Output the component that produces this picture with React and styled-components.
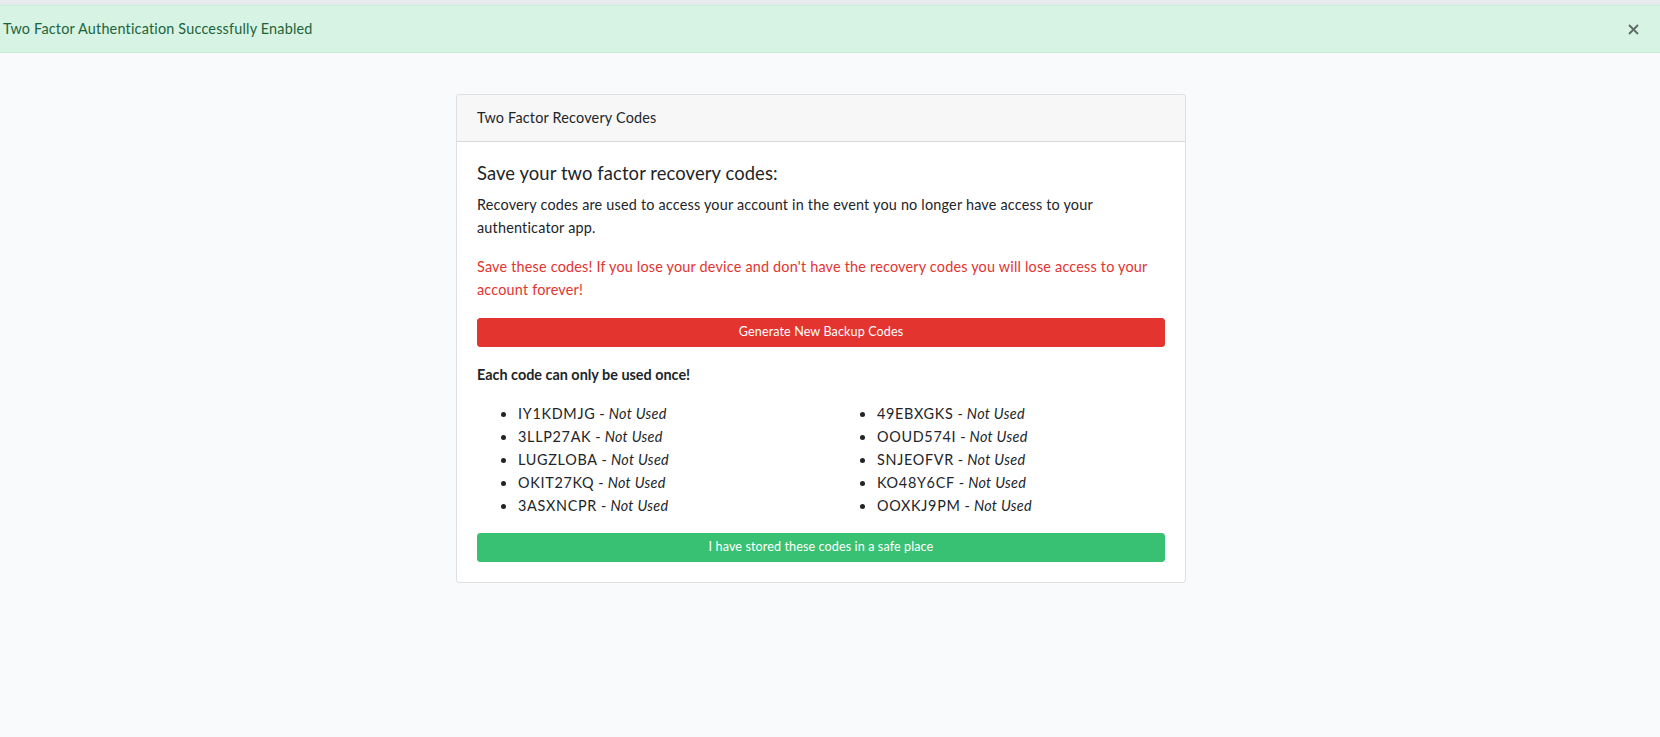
import React from "react";
import styled, { createGlobalStyle } from "styled-components";

const GlobalStyle = createGlobalStyle`
  html, body {
    margin: 0;
    padding: 0;
  }
  body {
    background: #f8fafc;
    font-family: Lato, "Noto Sans", sans-serif;
    font-size: 14.4px;
    line-height: 1.6;
    letter-spacing: 0.2px;
    color: #212529;
  }
`;

const TopStrip = styled.div`
  height: 5px;
  background: #e8ebee;
`;

const Alert = styled.div`
  height: 46px;
  display: flex;
  align-items: center;
  justify-content: space-between;
  padding: 0 20px 0 3px;
  background: #d7f3e3;
  border-top: 1px solid #c7eed8;
  border-bottom: 1px solid #c7eed8;
  color: #1d643b;
`;

const CloseButton = styled.button`
  border: 0;
  background: transparent;
  padding: 0;
  width: 14px;
  height: 14px;
  display: flex;
  align-items: center;
  justify-content: center;
  cursor: pointer;
`;

const Main = styled.main`
  display: flex;
  justify-content: center;
  padding: 41px 18px 0 0;
`;

const Card = styled.div`
  width: 728px;
  background: #fff;
  border: 1px solid rgba(0, 0, 0, 0.125);
  border-radius: 4px;
`;

const CardHeader = styled.div`
  padding: 11px 20px 12px;
  background: #f7f7f7;
  border-bottom: 1px solid rgba(0, 0, 0, 0.125);
  border-radius: 4px 4px 0 0;
`;

const CardBody = styled.div`
  padding: 20px;
`;

const Heading = styled.h4`
  margin: 0 0 8px;
  font-size: 18.4px;
  font-weight: 400;
  line-height: 23.3px;
  letter-spacing: 0.1px;
`;

const Text = styled.p`
  margin: ${(p) => p.$top || 0}px 0 16px;
  color: ${(p) => (p.$danger ? "#e3342f" : "#212529")};
  font-weight: ${(p) => (p.$bold ? 700 : 400)};
  letter-spacing: ${(p) => (p.$bold ? 0 : 0.2)}px;
`;

const Button = styled.button`
  display: block;
  width: 100%;
  height: 29px;
  border: 1px solid ${(p) => p.$color};
  border-radius: 3px;
  background: ${(p) => p.$color};
  color: #fff;
  font-family: inherit;
  font-size: 12.6px;
  line-height: 1.5;
  letter-spacing: 0.1px;
  cursor: pointer;
`;

const CodeList = styled.ul`
  display: grid;
  grid-template-columns: 359px 1fr;
  grid-auto-flow: column;
  grid-template-rows: repeat(5, 23px);
  margin: 0 0 16px;
  padding-left: 40px;
`;

const CodeItem = styled.li`
  line-height: 23px;
  padding-left: 1px;
`;

const Code = styled.span`
  letter-spacing: 0.7px;
`;

const Status = styled.em`
  font-style: italic;
  letter-spacing: 0.3px;
`;

const codes = [
  "IY1KDMJG",
  "3LLP27AK",
  "LUGZLOBA",
  "OKIT27KQ",
  "3ASXNCPR",
  "49EBXGKS",
  "OOUD574I",
  "SNJEOFVR",
  "KO48Y6CF",
  "OOXKJ9PM",
];

export default function App() {
  return (
    <>
      <GlobalStyle />
      <TopStrip />
      <Alert>
        <span>Two Factor Authentication Successfully Enabled</span>
        <CloseButton aria-label="Close">
          <svg width="11" height="11" viewBox="0 0 11 11">
            <path d="M1 1 L10 10 M10 1 L1 10" stroke="#5b6b63" strokeWidth="1.8" />
          </svg>
        </CloseButton>
      </Alert>
      <Main>
        <Card>
          <CardHeader>Two Factor Recovery Codes</CardHeader>
          <CardBody>
            <Heading>Save your two factor recovery codes:</Heading>
            <Text>
              Recovery codes are used to access your account in the event you no longer have
              access to your authenticator app.
            </Text>
            <Text $danger>
              Save these codes! If you lose your device and don't have the recovery codes you
              will lose access to your account forever!
            </Text>
            <Button $color="#e3342f">Generate New Backup Codes</Button>
            <Text $bold $top={16}>Each code can only be used once!</Text>
            <CodeList>
              {codes.map((code) => (
                <CodeItem key={code}>
                  <Code>{code}</Code> - <Status>Not Used</Status>
                </CodeItem>
              ))}
            </CodeList>
            <Button $color="#38c172">I have stored these codes in a safe place</Button>
          </CardBody>
        </Card>
      </Main>
    </>
  );
}
